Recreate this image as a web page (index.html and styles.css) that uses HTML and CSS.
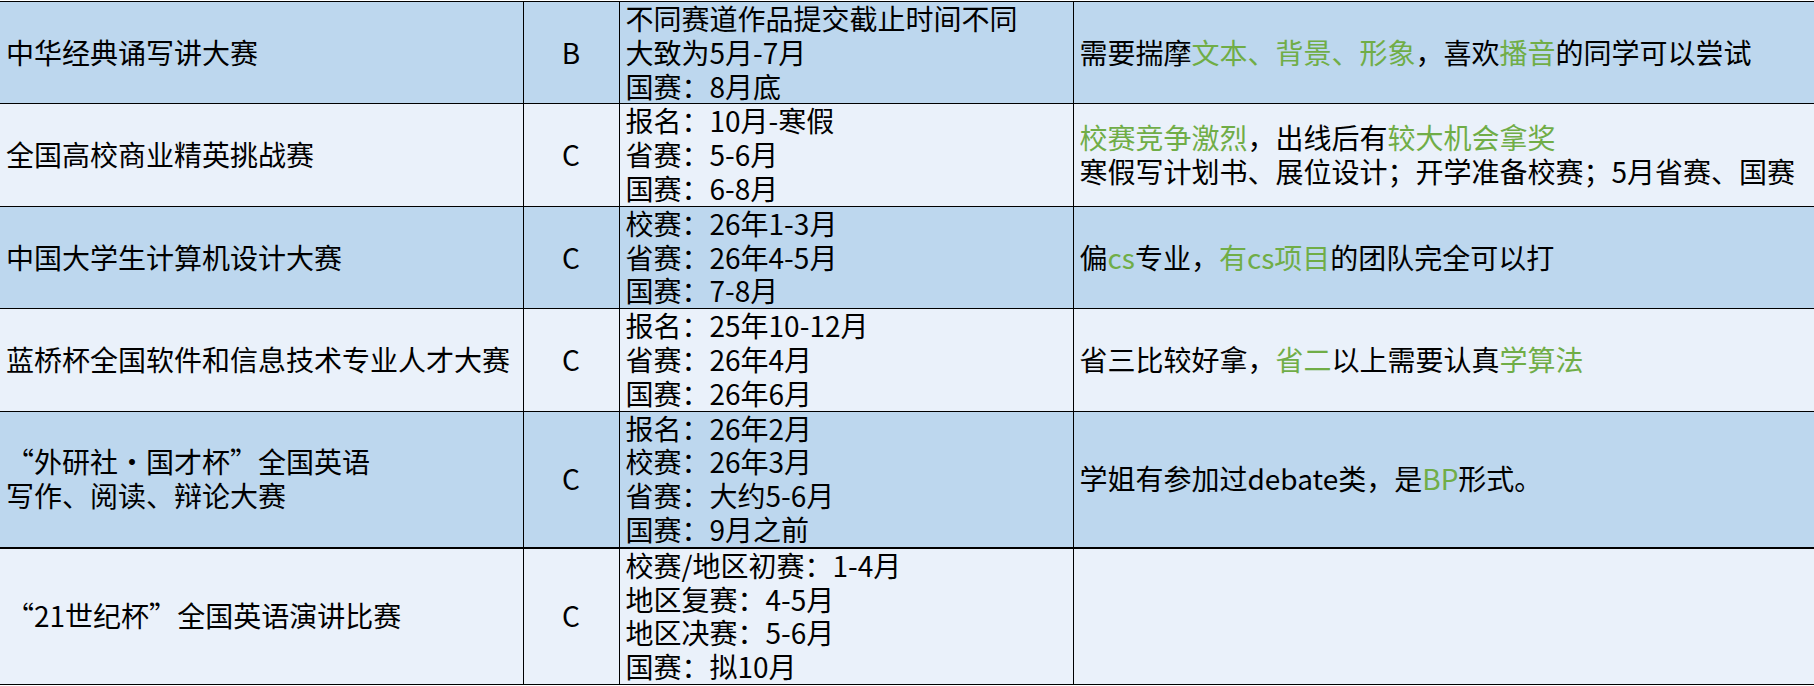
FILE: index.html
```html
<!DOCTYPE html>
<html lang="zh-CN">
<head>
<meta charset="utf-8">
<title>竞赛时间表</title>
<link rel="stylesheet" href="styles.css">
</head>
<body>
<table class="sheet">
  <colgroup>
    <col class="c-name">
    <col class="c-level">
    <col class="c-time">
    <col class="c-note">
  </colgroup>
  <tbody>
    <tr class="blue">
      <td class="name">中华经典诵写讲大赛</td>
      <td class="level">B</td>
      <td class="time">不同赛道作品提交截止时间不同<br>大致为5月-7月<br>国赛：8月底</td>
      <td class="note">需要揣摩<span class="g">文本、背景、形象</span>，喜欢<span class="g">播音</span>的同学可以尝试</td>
    </tr>
    <tr class="light">
      <td class="name">全国高校商业精英挑战赛</td>
      <td class="level">C</td>
      <td class="time">报名：10月-寒假<br>省赛：5-6月<br>国赛：6-8月</td>
      <td class="note"><span class="g">校赛竞争激烈</span>，出线后有<span class="g">较大机会拿奖</span><br>寒假写计划书、展位设计；开学准备校赛；5月省赛、国赛</td>
    </tr>
    <tr class="blue">
      <td class="name">中国大学生计算机设计大赛</td>
      <td class="level">C</td>
      <td class="time">校赛：26年1-3月<br>省赛：26年4-5月<br>国赛：7-8月</td>
      <td class="note">偏<span class="g">cs</span>专业，<span class="g">有cs项目</span>的团队完全可以打</td>
    </tr>
    <tr class="light">
      <td class="name">蓝桥杯全国软件和信息技术专业人才大赛</td>
      <td class="level">C</td>
      <td class="time">报名：25年10-12月<br>省赛：26年4月<br>国赛：26年6月</td>
      <td class="note">省三比较好拿，<span class="g">省二</span>以上需要认真<span class="g">学算法</span></td>
    </tr>
    <tr class="blue thick">
      <td class="name"><span class="fw">“</span>外研社<span class="fw">·</span>国才杯<span class="fw">”</span>全国英语<br>写作、阅读、辩论大赛</td>
      <td class="level">C</td>
      <td class="time">报名：26年2月<br>校赛：26年3月<br>省赛：大约5-6月<br>国赛：9月之前</td>
      <td class="note">学姐有参加过debate类，是<span class="g">BP</span>形式。</td>
    </tr>
    <tr class="light">
      <td class="name"><span class="fw">“</span>21世纪杯<span class="fw">”</span>全国英语演讲比赛</td>
      <td class="level">C</td>
      <td class="time">校赛/地区初赛：1-4月<br>地区复赛：4-5月<br>地区决赛：5-6月<br>国赛：拟10月</td>
      <td class="note"></td>
    </tr>
  </tbody>
</table>
</body>
</html>
```

FILE: styles.css
```css
html, body {
  margin: 0;
  padding: 0;
  background: #ffffff;
}

body {
  padding-top: 1px;
  overflow: hidden;
}

.sheet {
  width: 1814px;
  table-layout: fixed;
  border-collapse: collapse;
  font-family: "Liberation Sans Narrow", "Noto Sans CJK SC", sans-serif;
  font-size: 28px;
  line-height: 33.8px;
  color: #000000;
}

.c-name { width: 523px; }
.c-level { width: 96px; }
.c-time { width: 454px; }
.c-note { width: 741px; }

.sheet td {
  padding: 0 6px;
  vertical-align: middle;
  border-top: 1px solid #000;
  border-bottom: 1px solid #000;
  border-left: 1px solid #000;
  white-space: nowrap;
}

.sheet td:first-child {
  border-left: none;
  padding-left: 6px;
}

.sheet tr.thick td {
  border-bottom: 2px solid #000;
}

.blue td { background: #bdd7ee; }
.light td { background: #eaf1fa; }

.level { text-align: center; }

.g { color: #70ad47; }

.fw { font-family: "Noto Sans CJK SC", sans-serif; }
```
